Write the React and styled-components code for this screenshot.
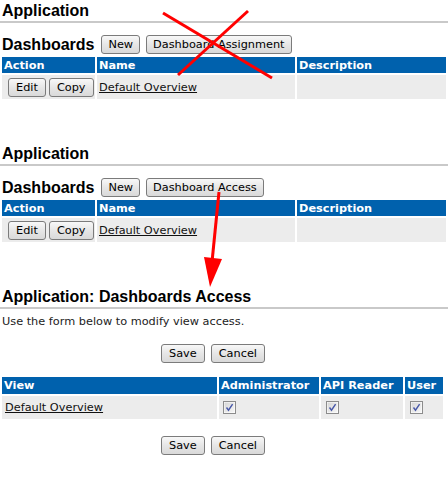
import React from "react";
import styled, { createGlobalStyle } from "styled-components";

const GlobalStyle = createGlobalStyle`
  html, body { margin: 0; padding: 0; background: #fff; }
  body {
    font-family: "DejaVu Sans", Verdana, sans-serif;
    font-size: 11.3px;
    color: #000;
  }
`;

const Page = styled.div`
  position: relative;
  width: 448px;
  padding-top: 2px;
  overflow: hidden;
`;

const Section = styled.section`
  margin-top: ${(p) => p.$gap || 0}px;
`;

const Heading = styled.h2`
  margin: 0;
  padding: 0 2px 1px;
  font: bold 16px/18px "Liberation Sans", Arial, sans-serif;
  color: #000;
  border-bottom: 2px solid #c9c9c9;
`;

const SubBar = styled.div`
  display: flex;
  align-items: center;
  gap: 6px;
  height: 21px;
  margin-top: 11px;
  padding-left: 2px;
`;

const SubTitle = styled.h3`
  margin: 0 1px 0 0;
  font: bold 16px/18px "Liberation Sans", Arial, sans-serif;
`;

const Button = styled.button`
  height: 19px;
  padding: 0 ${(p) => p.$pad || 6}px;
  margin: 0;
  border: 1px solid #7b7b7b;
  border-radius: 3px;
  background: linear-gradient(#f8f8f8, #e6e6e6 50%, #d9d9d9);
  font: 11.3px "DejaVu Sans", Verdana, sans-serif;
  color: #000;
  line-height: 17px;
`;

const Table = styled.table`
  border-collapse: separate;
  border-spacing: 2px;
  width: ${(p) => p.$width || "100%"};
  table-layout: fixed;
  margin-top: ${(p) => p.$top || 0}px;
`;

const Th = styled.th`
  background: #0061ad;
  color: #fff;
  font: bold 11.3px "DejaVu Sans", Verdana, sans-serif;
  text-align: left;
  height: ${(p) => p.$h || 16}px;
  padding: 0 2px;
  width: ${(p) => (p.$w ? `${p.$w}px` : "auto")};
  box-sizing: border-box;
  white-space: nowrap;
  overflow: hidden;
`;

const Td = styled.td`
  background: #ececec;
  height: ${(p) => p.$h || 24}px;
  padding: 0 2px 0 ${(p) => p.$padL || 2}px;
  box-sizing: border-box;
  vertical-align: middle;
`;

const Actions = styled.div`
  display: flex;
  gap: 3px;
`;

const Link = styled.a`
  color: #111;
  text-decoration: underline;
`;

const Intro = styled.p`
  margin: 6px 0 0 2px;
  color: #222;
`;

const ButtonRow = styled.div`
  display: flex;
  justify-content: center;
  gap: 6px;
  padding-right: 22px;
  margin-top: ${(p) => p.$top || 0}px;
`;

const CheckBox = styled.span`
  display: block;
  width: 13px;
  height: 13px;
`;

const Overlay = styled.svg`
  position: absolute;
  left: 0;
  top: 0;
  pointer-events: none;
`;

function Check() {
  return (
    <CheckBox>
      <svg width="13" height="13" viewBox="0 0 13 13">
        <defs>
          <linearGradient id="cbg" x1="0" y1="0" x2="1" y2="1">
            <stop offset="0" stopColor="#d6d6d6" />
            <stop offset="1" stopColor="#f7f7f7" />
          </linearGradient>
        </defs>
        <rect x="0.5" y="0.5" width="12" height="12" fill="#fff" stroke="#8c8c8c" />
        <rect x="1.5" y="1.5" width="10" height="10" fill="url(#cbg)" />
        <path d="M3.5 6.5 L5.5 9.2 L9.6 3.2" fill="none" stroke="#4757a8" strokeWidth="1.4" />
      </svg>
    </CheckBox>
  );
}

function DashboardSection({ gap, extra }) {
  return (
    <Section $gap={gap}>
      <Heading>Application</Heading>
      <SubBar>
        <SubTitle>Dashboards</SubTitle>
        <Button>New</Button>
        <Button>{extra}</Button>
      </SubBar>
      <Table>
        <thead>
          <tr>
            <Th $w={93}>Action</Th>
            <Th $w={198}>Name</Th>
            <Th>Description</Th>
          </tr>
        </thead>
        <tbody>
          <tr>
            <Td $padL={6}>
              <Actions>
                <Button $pad={7}>Edit</Button>
                <Button $pad={7}>Copy</Button>
              </Actions>
            </Td>
            <Td>
              <Link href="#">Default Overview</Link>
            </Td>
            <Td />
          </tr>
        </tbody>
      </Table>
    </Section>
  );
}

export default function App() {
  return (
    <Page>
      <GlobalStyle />
      <DashboardSection gap={0} extra="Dashboard Assignment" />
      <DashboardSection gap={44} extra="Dashboard Access" />
      <Section $gap={44}>
        <Heading>Application: Dashboards Access</Heading>
        <Intro>Use the form below to modify view access.</Intro>
        <ButtonRow $top={16}>
          <Button $pad={7}>Save</Button>
          <Button $pad={7}>Cancel</Button>
        </ButtonRow>
        <Table $width="445px" $top={12}>
          <thead>
            <tr>
              <Th $w={215} $h={17}>View</Th>
              <Th $w={100} $h={17}>Administrator</Th>
              <Th $w={82} $h={17}>API Reader</Th>
              <Th $h={17}>User</Th>
            </tr>
          </thead>
          <tbody>
            <tr>
              <Td $h={23} $padL={3}>
                <Link href="#">Default Overview</Link>
              </Td>
              <Td $h={23} $padL={4}>
                <Check />
              </Td>
              <Td $h={23} $padL={5}>
                <Check />
              </Td>
              <Td $h={23} $padL={5}>
                <Check />
              </Td>
            </tr>
          </tbody>
        </Table>
        <ButtonRow $top={15}>
          <Button $pad={7}>Save</Button>
          <Button $pad={7}>Cancel</Button>
        </ButtonRow>
      </Section>
      <Overlay width="448" height="500" viewBox="0 0 448 500">
        <g stroke="#ff0000" strokeWidth="3" strokeLinecap="butt">
          <line x1="163" y1="13" x2="272" y2="78" />
          <line x1="248" y1="11" x2="178" y2="75" />
          <line x1="219" y1="192" x2="212" y2="262" />
        </g>
        <polygon points="204,257 222,259 210,287" fill="#ff0000" />
      </Overlay>
    </Page>
  );
}
